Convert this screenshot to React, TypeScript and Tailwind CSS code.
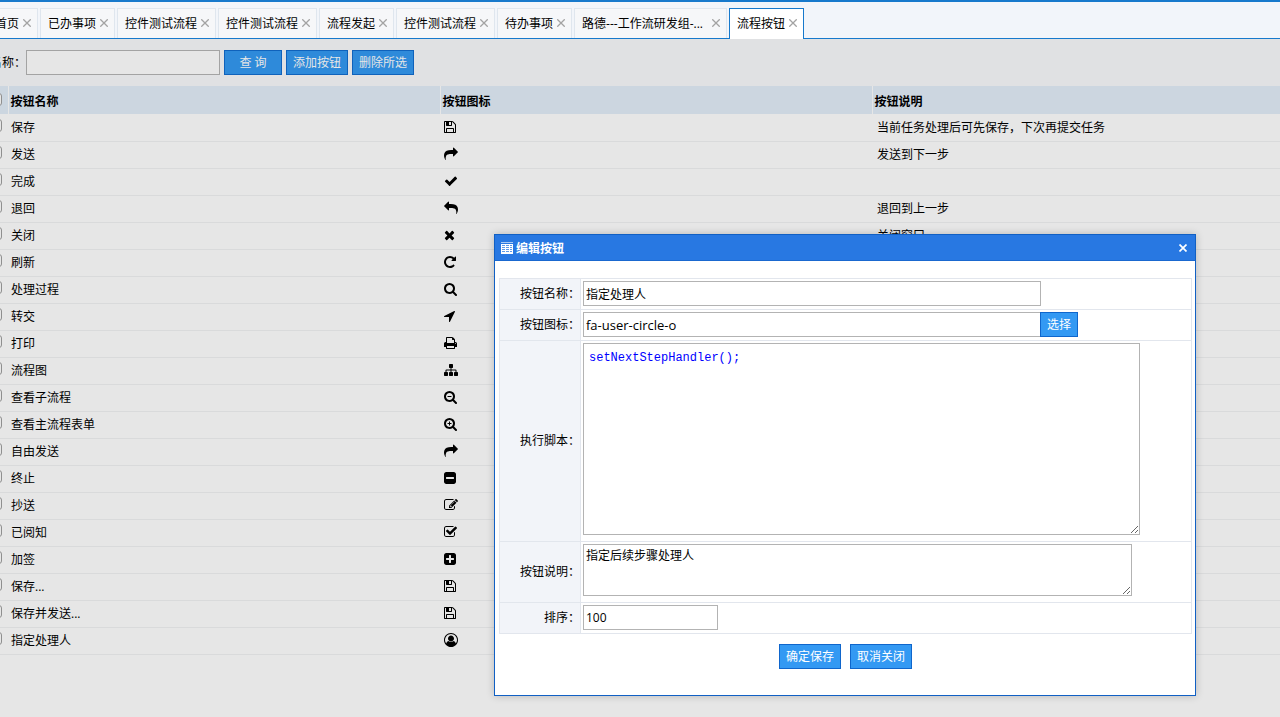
import { useState } from 'react';

const ICONS: Record<string, { x: number; d: string }> = {
  save: {
    x: 128,
    d: 'M512 1536h768v-384h-768v384zm896 0h128v-896q0-14-10-38.5t-20-34.5l-281-281q-10-10-34-20t-39-10v416q0 40-28 68t-68 28h-576q-40 0-68-28t-28-68v-416h-128v1280h128v-416q0-40 28-68t68-28h832q40 0 68 28t28 68v416zm-384-928v-320q0-13-9.5-22.5t-22.5-9.5h-192q-13 0-22.5 9.5t-9.5 22.5v320q0 13 9.5 22.5t22.5 9.5h192q13 0 22.5-9.5t9.5-22.5zm640 32v928q0 40-28 68t-68 28h-1344q-40 0-68-28t-28-68v-1344q0-40 28-68t68-28h928q40 0 88 20t76 48l280 280q28 28 48 76t20 88z',
  },
  share: {
    x: 0,
    d: 'M1792 640q0 26-19 45l-512 512q-19 19-45 19t-45-19-19-45v-256h-224q-98 0-175.5 6t-154 21.5-133 42.5-105.5 69.5-80 101-48.5 138.5-17.5 181q0 55 5 123 0 6 2.5 23.5t2.5 26.5q0 15-8.5 25t-23.5 10q-16 0-28-17-7-9-13-22t-13.5-30-10.5-24q-127-285-127-451 0-199 53-333 162-403 875-403h224v-256q0-26 19-45t45-19 45 19l512 512q19 19 19 45z',
  },
  check: {
    x: 0,
    d: 'M1671 566q0 40-28 68l-724 724-136 136q-28 28-68 28t-68-28l-136-136-362-362q-28-28-28-68t28-68l136-136q28-28 68-28t68 28l294 295 656-657q28-28 68-28t68 28l136 136q28 28 28 68z',
  },
  reply: {
    x: 0,
    d: 'M1792 1120q0 166-127 451-3 7-10.5 24t-13.5 30-13 22q-12 17-28 17-15 0-23.5-10t-8.5-25q0-9 2.5-26.5t2.5-23.5q5-68 5-123 0-101-17.5-181t-48.5-138.5-80-101-105.5-69.5-133-42.5-154-21.5-175.5-6h-224v256q0 26-19 45t-45 19-45-19l-512-512q-19-19-19-45t19-45l512-512q19-19 45-19t45 19 19 45v256h224q713 0 875 403 53 134 53 333z',
  },
  close: {
    x: 192,
    d: 'M1490 1322q0 40-28 68l-136 136q-28 28-68 28t-68-28l-294-294-294 294q-28 28-68 28t-68-28l-136-136q-28-28-28-68t28-68l294-294-294-294q-28-28-28-68t28-68l136-136q28-28 68-28t68 28l294 294 294-294q28-28 68-28t68 28l136 136q28 28 28 68t-28 68l-294 294 294 294q28 28 28 68z',
  },
  refresh: {
    x: 128,
    d: 'M1664 256v448q0 26-19 45t-45 19h-448q-42 0-59-40-17-39 14-69l138-138q-148-137-349-137-104 0-198.5 40.5t-163.5 109.5-109.5 163.5-40.5 198.5 40.5 198.5 109.5 163.5 163.5 109.5 198.5 40.5q119 0 225-52t179-147q7-10 23-12 15 0 25 9l137 138q9 8 9.5 20.5t-7.5 22.5q-109 132-264 204.5t-327 72.5q-156 0-298-61t-245-164-164-245-61-298 61-298 164-245 245-164 298-61q147 0 284.5 55.5t244.5 156.5l130-129q29-31 70-14 39 17 39 59z',
  },
  search: {
    x: 64,
    d: 'M1216 832q0-185-131.5-316.5t-316.5-131.5-316.5 131.5-131.5 316.5 131.5 316.5 316.5 131.5 316.5-131.5 131.5-316.5zm512 832q0 52-38 90t-90 38q-54 0-90-38l-343-342q-179 124-399 124-143 0-273.5-55.5t-225-150-150-225-55.5-273.5 55.5-273.5 150-225 225-150 273.5-55.5 273.5 55.5 225 150 150 225 55.5 273.5q0 220-124 399l343 343q37 37 37 90z',
  },
  arrow: {
    x: 192,
    d: 'M1593 349l-640 1280q-17 35-57 35-5 0-15-2-22-5-35.5-22.5t-13.5-39.5v-576h-576q-22 0-39.5-13.5t-22.5-35.5 4-42 29-30l1280-640q13-7 29-7 27 0 45 19 15 14 18.5 34.5t-6.5 39.5z',
  },
  print: {
    x: 64,
    d: 'M448 1536h896v-256h-896v256zm0-640h896v-384h-160q-40 0-68-28t-28-68v-160h-640v640zm1152 64q0-26-19-45t-45-19-45 19-19 45 19 45 45 19 45-19 19-45zm128 0v416q0 13-9.5 22.5t-22.5 9.5h-224v160q0 40-28 68t-68 28h-960q-40 0-68-28t-28-68v-160h-224q-13 0-22.5-9.5t-9.5-22.5v-416q0-79 56.5-135.5t135.5-56.5h64v-544q0-40 28-68t68-28h672q40 0 88 20t76 48l152 152q28 28 48 76t20 88v256h64q79 0 135.5 56.5t56.5 135.5z',
  },
  sitemap: {
    x: 0,
    d: 'M1792 1248v320q0 40-28 68t-68 28h-320q-40 0-68-28t-28-68v-320q0-40 28-68t68-28h96v-192h-512v192h96q40 0 68 28t28 68v320q0 40-28 68t-68 28h-320q-40 0-68-28t-28-68v-320q0-40 28-68t68-28h96v-192h-512v192h96q40 0 68 28t28 68v320q0 40-28 68t-68 28h-320q-40 0-68-28t-28-68v-320q0-40 28-68t68-28h96v-192q0-52 38-90t90-38h512v-192h-96q-40 0-68-28t-28-68v-320q0-40 28-68t68-28h320q40 0 68 28t28 68v320q0 40-28 68t-68 28h-96v192h512q52 0 90 38t38 90v192h96q40 0 68 28t28 68z',
  },
  zoomOut: {
    x: 64,
    d: 'M1024 800v64q0 13-9.5 22.5t-22.5 9.5h-448q-13 0-22.5-9.5t-9.5-22.5v-64q0-13 9.5-22.5t22.5-9.5h448q13 0 22.5 9.5t9.5 22.5zM1216 832q0-185-131.5-316.5t-316.5-131.5-316.5 131.5-131.5 316.5 131.5 316.5 316.5 131.5 316.5-131.5 131.5-316.5zm512 832q0 52-38 90t-90 38q-54 0-90-38l-343-342q-179 124-399 124-143 0-273.5-55.5t-225-150-150-225-55.5-273.5 55.5-273.5 150-225 225-150 273.5-55.5 273.5 55.5 225 150 150 225 55.5 273.5q0 220-124 399l343 343q37 37 37 90z',
  },
  zoomIn: {
    x: 64,
    d: 'M1024 800v64q0 13-9.5 22.5t-22.5 9.5h-160v160q0 13-9.5 22.5t-22.5 9.5h-64q-13 0-22.5-9.5t-9.5-22.5v-160h-160q-13 0-22.5-9.5t-9.5-22.5v-64q0-13 9.5-22.5t22.5-9.5h160v-160q0-13 9.5-22.5t22.5-9.5h64q13 0 22.5 9.5t9.5 22.5v160h160q13 0 22.5 9.5t9.5 22.5zM1216 832q0-185-131.5-316.5t-316.5-131.5-316.5 131.5-131.5 316.5 131.5 316.5 316.5 131.5 316.5-131.5 131.5-316.5zm512 832q0 52-38 90t-90 38q-54 0-90-38l-343-342q-179 124-399 124-143 0-273.5-55.5t-225-150-150-225-55.5-273.5 55.5-273.5 150-225 225-150 273.5-55.5 273.5 55.5 225 150 150 225 55.5 273.5q0 220-124 399l343 343q37 37 37 90z',
  },
  minus: {
    x: 128,
    d: 'M1408 960v-128q0-26-19-45t-45-19h-896q-26 0-45 19t-19 45v128q0 26 19 45t45 19h896q26 0 45-19t19-45zm256-544v960q0 119-84.5 203.5t-203.5 84.5h-960q-119 0-203.5-84.5t-84.5-203.5v-960q0-119 84.5-203.5t203.5-84.5h960q119 0 203.5 84.5t84.5 203.5z',
  },
  plus: {
    x: 128,
    d: 'M1408 960v-128q0-26-19-45t-45-19h-320v-320q0-26-19-45t-45-19h-128q-26 0-45 19t-19 45v320h-320q-26 0-45 19t-19 45v128q0 26 19 45t45 19h320v320q0 26 19 45t45 19h128q26 0 45-19t19-45v-320h320q26 0 45-19t19-45zm256-544v960q0 119-84.5 203.5t-203.5 84.5h-960q-119 0-203.5-84.5t-84.5-203.5v-960q0-119 84.5-203.5t203.5-84.5h960q119 0 203.5 84.5t84.5 203.5z',
  },
  edit: {
    x: 0,
    d: 'M888 1184l116-116-152-152-116 116v56h96v96h56zm440-720q-16-16-33 1l-350 350q-17 17-1 33t33-1l350-350q17-17 1-33zm80 594v190q0 119-84.5 203.5t-203.5 84.5h-832q-119 0-203.5-84.5t-84.5-203.5v-832q0-119 84.5-203.5t203.5-84.5h832q63 0 117 25 15 7 18 23 3 17-9 29l-49 49q-14 14-32 8-23-6-45-6h-832q-66 0-113 47t-47 113v832q0 66 47 113t113 47h832q66 0 113-47t47-113v-126q0-13 9-22l64-64q15-15 35-7t20 29zm-96-738l288 288-672 672h-288v-288zm444 132l-92 92-288-288 92-92q28-28 68-28t68 28l152 152q28 28 28 68t-28 68z',
  },
  checkSquare: {
    x: 64,
    d: 'M1472 930v318q0 119-84.5 203.5t-203.5 84.5h-832q-119 0-203.5-84.5t-84.5-203.5v-832q0-119 84.5-203.5t203.5-84.5h832q63 0 117 25 15 7 18 23 3 17-9 29l-49 49q-10 10-23 10-3 0-9-2-23-6-45-6h-832q-66 0-113 47t-47 113v832q0 66 47 113t113 47h832q66 0 113-47t47-113v-254q0-13 9-22l64-64q10-10 23-10 6 0 12 3 20 8 20 29zm231-489l-814 814q-24 24-57 24t-57-24l-430-430q-24-24-24-57t24-57l110-110q24-24 57-24t57 24l263 263 647-647q24-24 57-24t57 24l110 110q24 24 24 57t-24 57z',
  },
  user: {
    x: 0,
    d: 'M896 0q182 0 348 71t286 191 191 286 71 348q0 181-70.5 347t-190.5 286-286 191.5-349 71.5-349-71-285.5-191.5-190.5-286-71-347.5 71-348 191-286 286-191 348-71zm619 1351q149-205 149-455 0-156-61-298t-164-245-245-164-298-61-298 61-245 164-164 245-61 298q0 250 149 455 66-327 306-327 131 128 313 128t313-128q240 0 306 327zm-235-647q0-159-112.5-271.5t-271.5-112.5-271.5 112.5-112.5 271.5 112.5 271.5 271.5 112.5 271.5-112.5 112.5-271.5z',
  },
};

const TABS = [
  '首页',
  '已办事项',
  '控件测试流程',
  '控件测试流程',
  '流程发起',
  '控件测试流程',
  '待办事项',
  '路德---工作流研发组-...',
  '流程按钮',
];

const ROWS = [
  { name: '保存', icon: 'save', desc: '当前任务处理后可先保存，下次再提交任务' },
  { name: '发送', icon: 'share', desc: '发送到下一步' },
  { name: '完成', icon: 'check', desc: '' },
  { name: '退回', icon: 'reply', desc: '退回到上一步' },
  { name: '关闭', icon: 'close', desc: '关闭窗口' },
  { name: '刷新', icon: 'refresh', desc: '' },
  { name: '处理过程', icon: 'search', desc: '' },
  { name: '转交', icon: 'arrow', desc: '' },
  { name: '打印', icon: 'print', desc: '' },
  { name: '流程图', icon: 'sitemap', desc: '' },
  { name: '查看子流程', icon: 'zoomOut', desc: '' },
  { name: '查看主流程表单', icon: 'zoomIn', desc: '' },
  { name: '自由发送', icon: 'share', desc: '' },
  { name: '终止', icon: 'minus', desc: '' },
  { name: '抄送', icon: 'edit', desc: '' },
  { name: '已阅知', icon: 'checkSquare', desc: '' },
  { name: '加签', icon: 'plus', desc: '' },
  { name: '保存...', icon: 'save', desc: '' },
  { name: '保存并发送...', icon: 'save', desc: '' },
  { name: '指定处理人', icon: 'user', desc: '' },
];

const box = 'appearance-none block size-[13px] rounded-[3px] border border-[#8f8f8f] bg-[#e6e6e6]';
const headCell = 'border-l border-[#e6e6e6] p-0 pt-1 pl-[2px]';
const toolBtn = 'h-[25px] border border-[#0f62bb] bg-[#2e8ada] text-[#e6e6e6] whitespace-nowrap';
const dlgBtn = 'h-[25px] border border-[#0f66cc] bg-[#3399f3] text-white whitespace-nowrap';
const field = 'border border-[#b3b3b3] bg-white px-[2px] outline-none';
const labelCell = 'border border-[#e2e6ed] bg-[#f2f4f9] p-0 text-right font-normal';
const fieldCell = 'border border-[#e2e6ed] px-[2px] py-0 align-top pt-[2px]';

function Icon({ name }: { name: string }) {
  const { x, d } = ICONS[name];
  return (
    <svg className="block size-[14px]" viewBox={`${x} 0 1792 1792`} fill="currentColor" overflow="visible">
      <path d={d} />
    </svg>
  );
}

function TabBar({ active, onSelect }: { active: number; onSelect: (i: number) => void }) {
  return (
    <nav className="flex h-[37px] items-end gap-[2px] border-b border-[#1779cc] bg-[#f2f5fa] shrink-0">
      {TABS.map((t, i) => (
        <div
          key={i}
          className={
            i === active
              ? '-mb-px flex h-[31px] shrink-0 items-center gap-1 border border-b-0 border-[#1779cc] bg-white pl-[7px] pr-[6px]'
              : 'flex h-[30px] shrink-0 items-center gap-1 border border-b-0 border-[#dfe6ee] bg-[#f6f7f9] pl-[7px] pr-[6px]'
          }
        >
          <button
            className={t.length > 12 ? 'min-w-[126px] text-left whitespace-nowrap leading-4' : 'whitespace-nowrap leading-4'}
            onClick={() => onSelect(i)}
          >
            {t}
          </button>
          <button aria-label="关闭" className="pb-[2px] text-[#a3a3a3]">
            <svg className="block size-2" viewBox="0 0 8 8" fill="none" stroke="currentColor" strokeWidth="1.3">
              <path d="M0.3 0.3l7.4 7.4M7.7 0.3l-7.4 7.4" />
            </svg>
          </button>
        </div>
      ))}
    </nav>
  );
}

function ButtonTable() {
  return (
    <table className="w-full table-fixed border-collapse">
      <colgroup>
        <col className="w-[21px]" />
        <col />
        <col />
        <col />
      </colgroup>
      <thead>
        <tr className="h-[28px] border-b border-[#e6e6e6] bg-[#ccd6e0] text-left">
          <th className="p-0 pl-[2px]"><input type="checkbox" aria-label="全选" className={box} /></th>
          <th className={headCell}>按钮名称</th>
          <th className={headCell}>按钮图标</th>
          <th className={headCell}>按钮说明</th>
        </tr>
      </thead>
      <tbody>
        {ROWS.map((r) => (
          <tr key={r.name} className="h-[27px] border-b border-[#d9dadb]">
            <td className="p-0 pb-1 pl-[2px]"><input type="checkbox" aria-label={r.name} className={box} /></td>
            <td className="p-0 pl-[3px]">{r.name}</td>
            <td className="p-0 pb-[2px] pl-1"><Icon name={r.icon} /></td>
            <td className="p-0 pl-[5px]">{r.desc}</td>
          </tr>
        ))}
      </tbody>
    </table>
  );
}

function EditDialog() {
  return (
    <div
      role="dialog"
      aria-label="编辑按钮"
      className="absolute left-[494px] top-[234px] w-[702px] border border-[#1160c4] bg-white pb-[26px] shadow-[0_0_8px_rgba(0,0,0,0.2)]"
    >
      <div className="flex h-[26px] items-center border-b border-[#1a68cf] bg-[#2878e2] pl-[6px] pr-2 text-white">
        <svg className="size-3 shrink-0" viewBox="0 0 12 12" shapeRendering="crispEdges">
          <path fill="#a9c9f3" d="M0 0h12v1H0z" />
          <path fill="#fff" d="M0 2h12v10H0z" />
          <path fill="#5f9ae9" d="M1 3h3v1H1zM5 3h3v1H5zM9 3h2v1H9zM1 5h3v1H1zM5 5h3v1H5zM9 5h2v1H9zM1 7h3v1H1zM5 7h3v1H5zM9 7h2v1H9zM1 9h3v1H1zM5 9h3v1H5zM9 9h2v1H9z" />
        </svg>
        <h2 className="ml-[3px] flex-1 pt-[2px] font-bold leading-4">编辑按钮</h2>
        <button aria-label="关闭窗口">
          <svg className="block size-2" viewBox="0 0 8 8" fill="none" stroke="currentColor" strokeWidth="1.7">
            <path d="M.5.5l7 7M7.5.5l-7 7" />
          </svg>
        </button>
      </div>

      <form className="pl-1 pr-[3px] pt-[17px]" onSubmit={(e) => e.preventDefault()}>
        <table className="w-full table-fixed border-collapse">
          <colgroup>
            <col className="w-[81px]" />
            <col />
          </colgroup>
          <tbody>
            <tr className="h-[31px]">
              <th className={labelCell}><label htmlFor="name">按钮名称：</label></th>
              <td className={fieldCell}>
                <input id="name" className={`${field} block h-[25px] w-[458px]`} defaultValue="指定处理人" />
              </td>
            </tr>
            <tr className="h-[31px]">
              <th className={labelCell}><label htmlFor="icon">按钮图标：</label></th>
              <td className={fieldCell}>
                <div className="flex">
                  <input id="icon" className={`${field} h-[25px] w-[458px] text-[13px]`} defaultValue="fa-user-circle-o" />
                  <button type="button" className={`${dlgBtn} -ml-px w-[38px]`}>选择</button>
                </div>
              </td>
            </tr>
            <tr className="h-[201px]">
              <th className={labelCell}><label htmlFor="script">执行脚本：</label></th>
              <td className={fieldCell}>
                <textarea
                  id="script"
                  spellCheck={false}
                  className="block h-[192px] w-[557px] border border-[#b3b3b3] bg-white px-[5px] py-[6px] font-['Liberation_Mono',monospace] text-[12px] leading-4 text-[#0000ff] outline-none"
                  defaultValue="setNextStepHandler();"
                />
              </td>
            </tr>
            <tr className="h-[61px]">
              <th className={labelCell}><label htmlFor="desc">按钮说明：</label></th>
              <td className={fieldCell}>
                <textarea id="desc" className={`${field} block h-[52px] w-[549px] py-[3px]`} defaultValue="指定后续步骤处理人" />
              </td>
            </tr>
            <tr className="h-[31px]">
              <th className={labelCell}><label htmlFor="order">排序：</label></th>
              <td className={fieldCell}>
                <input id="order" className={`${field} block h-[25px] w-[135px]`} defaultValue="100" />
              </td>
            </tr>
          </tbody>
        </table>

        <div className="mt-[10px] flex justify-center gap-[9px]">
          <button type="submit" className={`${dlgBtn} w-[62px]`}>确定保存</button>
          <button type="button" className={`${dlgBtn} w-[62px]`}>取消关闭</button>
        </div>
      </form>
    </div>
  );
}

export default function App() {
  const [active, setActive] = useState(TABS.length - 1);

  return (
    <div className="relative flex min-h-screen flex-col overflow-hidden bg-[#e6e6e6] font-['Open_Sans','Noto_Sans_CJK_SC',sans-serif] text-[12px] leading-4 text-black">
      {/* the page is scrolled sideways a little, so both edges run past the window */}
      <div className="-ml-[13px] -mr-6">
        <div className="h-[2px] bg-[#1779cc]" />
        <TabBar active={active} onSelect={setActive} />

        <div className="flex h-[47px] items-center gap-1 bg-[#e0e1e3] pl-[3px]">
          <div className="flex items-center">
            <label htmlFor="keyword">名称：</label>
            <input id="keyword" className="h-[25px] w-[194px] border border-[#a3a3a3] bg-[#e6e6e6] px-1 outline-none" />
          </div>
          <button className={`${toolBtn} w-[58px]`}>查 询</button>
          <button className={`${toolBtn} w-[62px]`}>添加按钮</button>
          <button className={`${toolBtn} w-[62px]`}>删除所选</button>
        </div>

        <ButtonTable />
      </div>

      <EditDialog />
    </div>
  );
}
